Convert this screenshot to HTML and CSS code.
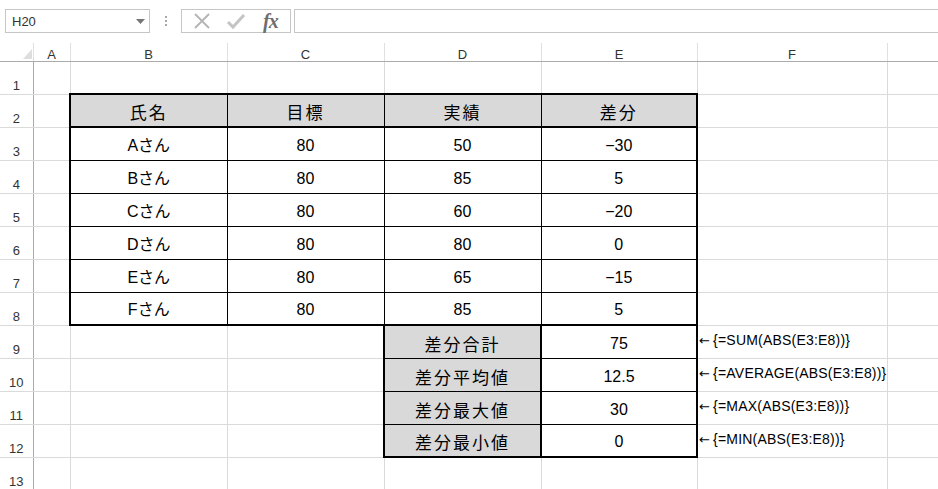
FILE: index.html
```html
<!DOCTYPE html>
<html lang="ja">
<head>
<meta charset="utf-8">
<title>Sheet</title>
<link rel="stylesheet" href="styles.css">
</head>
<body>
<div class="topbar">
  <div class="namebox">
    <span class="ref">H20</span>
    <svg class="dd" width="9" height="5" viewBox="0 0 9 5"><path d="M0 0H9L4.5 5Z" fill="#767676"/></svg>
  </div>
  <div class="grip"><i></i><i></i><i></i></div>
  <div class="fxbox">
    <svg class="ic" width="18" height="18" viewBox="0 0 18 18"><path d="M2 2L16 16M16 2L2 16" stroke="#b4b4b4" stroke-width="1.8" fill="none"/></svg>
    <svg class="ic" width="20" height="18" viewBox="0 0 20 18"><path d="M2 10L7 15L18 3" stroke="#c4c4c4" stroke-width="3" fill="none"/></svg>
    <span class="fx">fx</span>
  </div>
  <div class="formula"></div>
</div>
<table class="sheet">
  <colgroup>
    <col class="w-rh"><col class="w-a"><col class="w-b"><col class="w-c"><col class="w-d"><col class="w-e"><col class="w-f"><col class="w-g">
  </colgroup>
  <thead>
    <tr class="colhdr">
      <th class="corner"><svg width="9" height="10" viewBox="0 0 9 10"><path d="M9 0V10H0Z" fill="#dedede"/></svg></th>
      <th>A</th><th>B</th><th>C</th><th>D</th><th>E</th><th>F</th><th></th>
    </tr>
  </thead>
  <tbody>
    <tr><th>1</th><td></td><td></td><td></td><td></td><td></td><td></td><td></td></tr>
    <tr><th>2</th><td></td><td class="t hd top bot l ja">氏名</td><td class="t hd top bot ja">目標</td><td class="t hd top bot ja">実績</td><td class="t hd top bot r ja">差分</td><td></td><td></td></tr>
    <tr><th>3</th><td></td><td class="t l">Aさん</td><td class="t">80</td><td class="t">50</td><td class="t r">−30</td><td></td><td></td></tr>
    <tr><th>4</th><td></td><td class="t l">Bさん</td><td class="t">80</td><td class="t">85</td><td class="t r">5</td><td></td><td></td></tr>
    <tr><th>5</th><td></td><td class="t l">Cさん</td><td class="t">80</td><td class="t">60</td><td class="t r">−20</td><td></td><td></td></tr>
    <tr><th>6</th><td></td><td class="t l">Dさん</td><td class="t">80</td><td class="t">80</td><td class="t r">0</td><td></td><td></td></tr>
    <tr><th>7</th><td></td><td class="t l">Eさん</td><td class="t">80</td><td class="t">65</td><td class="t r">−15</td><td></td><td></td></tr>
    <tr><th>8</th><td></td><td class="t l bot">Fさん</td><td class="t bot">80</td><td class="t bot">85</td><td class="t r bot">5</td><td></td><td></td></tr>
    <tr><th>9</th><td></td><td></td><td></td><td class="t hd l r top ja">差分合計</td><td class="t r top">75</td><td class="note"><span><b class="arr">←</b>{=SUM(ABS(E3:E8))}</span></td><td></td></tr>
    <tr><th>10</th><td></td><td></td><td></td><td class="t hd l r ja">差分平均値</td><td class="t r">12.5</td><td class="note"><span><b class="arr">←</b>{=AVERAGE(ABS(E3:E8))}</span></td><td></td></tr>
    <tr><th>11</th><td></td><td></td><td></td><td class="t hd l r ja">差分最大値</td><td class="t r">30</td><td class="note"><span><b class="arr">←</b>{=MAX(ABS(E3:E8))}</span></td><td></td></tr>
    <tr><th>12</th><td></td><td></td><td></td><td class="t hd l r bot ja">差分最小値</td><td class="t r bot">0</td><td class="note"><span><b class="arr">←</b>{=MIN(ABS(E3:E8))}</span></td><td></td></tr>
    <tr><th>13</th><td></td><td></td><td></td><td></td><td></td><td></td><td></td></tr>
  </tbody>
</table>
</body>
</html>
```
FILE: styles.css
```css
html, body {
  margin: 0;
  padding: 0;
  background: #fff;
  overflow: hidden;
}
body {
  width: 938px;
  height: 489px;
  font-family: "Liberation Sans", "Noto Sans CJK JP", sans-serif;
  color: #000;
}
.topbar {
  display: flex;
  align-items: center;
  height: 43px;
  padding: 0 0 0 5px;
  box-sizing: border-box;
}
.namebox {
  width: 145px;
  height: 24px;
  box-sizing: border-box;
  border: 1px solid #c6c6c6;
  display: flex;
  align-items: center;
  justify-content: space-between;
  padding: 0 4px 0 6px;
  margin-top: -1px;
}
.ref {
  font-size: 13px;
  color: #333;
}
.dd { margin-top: 1px; }
.grip {
  width: 31px;
  display: flex;
  flex-direction: column;
  align-items: center;
  gap: 2px;
  margin-top: -1px;
}
.grip i {
  display: block;
  width: 2px;
  height: 2px;
  background: #a8a8a8;
}
.fxbox {
  width: 110px;
  height: 24px;
  box-sizing: border-box;
  border: 1px solid #c6c6c6;
  display: flex;
  align-items: center;
  padding: 0 0 0 11px;
  gap: 15px;
  margin-top: -1px;
}
.fx {
  font-family: "Liberation Serif", serif;
  font-style: italic;
  font-weight: bold;
  font-size: 20px;
  color: #6e6e6e;
  letter-spacing: -1px;
  margin-left: 2px;
}
.formula {
  flex: 1;
  height: 24px;
  box-sizing: border-box;
  border: 1px solid #c6c6c6;
  border-right: none;
  margin-left: 3px;
  margin-top: -1px;
}
.sheet {
  border-collapse: collapse;
  table-layout: fixed;
  width: 938px;
}
.w-rh { width: 33px; }
.w-a { width: 37px; }
.w-b { width: 157px; }
.w-c { width: 157px; }
.w-d { width: 157px; }
.w-e { width: 156px; }
.w-f { width: 190px; }
.w-g { width: 51px; }
.sheet th, .sheet td {
  padding: 0;
  border: 1px solid #dadada;
}
.sheet .colhdr { height: 18px; }
.sheet .colhdr th {
  font-weight: normal;
  font-size: 13px;
  color: #333;
  line-height: 10px;
  text-align: center;
  border-top: none;
  border-bottom: 1px solid #ababab;
  border-left: 1px solid #e0e0e0;
  border-right: 1px solid #e0e0e0;
  vertical-align: bottom;
  padding: 0 0 1px;
}
.sheet .colhdr th.corner {
  border-left: none;
  border-right: 1px solid #e0e0e0;
  padding: 0 1px 2px 0;
}
.corner svg { display: block; margin: 0 0 0 auto; }
.sheet tbody tr { height: 33px; }
.sheet tbody th {
  font-weight: normal;
  font-size: 13px;
  color: #333;
  text-align: center;
  vertical-align: bottom;
  line-height: 14px;
  padding: 0 0 1px;
  border-left: none;
  border-right: 1px solid #ababab;
}
.sheet tbody td {
  font-size: 16px;
  line-height: 18px;
  text-align: center;
  vertical-align: bottom;
  padding: 0 0 5px;
  white-space: nowrap;
}
.sheet td.t {
  border: 1px solid #000;
}
.sheet td.ja {
  font-family: "Noto Sans CJK JP", sans-serif;
  font-size: 17px;
  letter-spacing: 2px;
  padding: 0 0 5px;
}
.sheet td.hd { background: #d9d9d9; }
.sheet td.top { border-top: 2px solid #000; }
.sheet td.bot { border-bottom: 2px solid #000; }
.sheet td.l { border-left: 2px solid #000; }
.sheet td.r { border-right: 2px solid #000; }
.sheet td.note {
  text-align: left;
  padding: 0 0 11px;
  overflow: visible;
}
.note span {
  display: inline-block;
  vertical-align: bottom;
  font-size: 14px;
  line-height: 14px;
  height: 14px;
  letter-spacing: 0.2px;
}
.note .arr {
  font-family: "DejaVu Sans", sans-serif;
  font-weight: normal;
  font-size: 13px;
  margin: 0 3px 0 1px;
}
```
